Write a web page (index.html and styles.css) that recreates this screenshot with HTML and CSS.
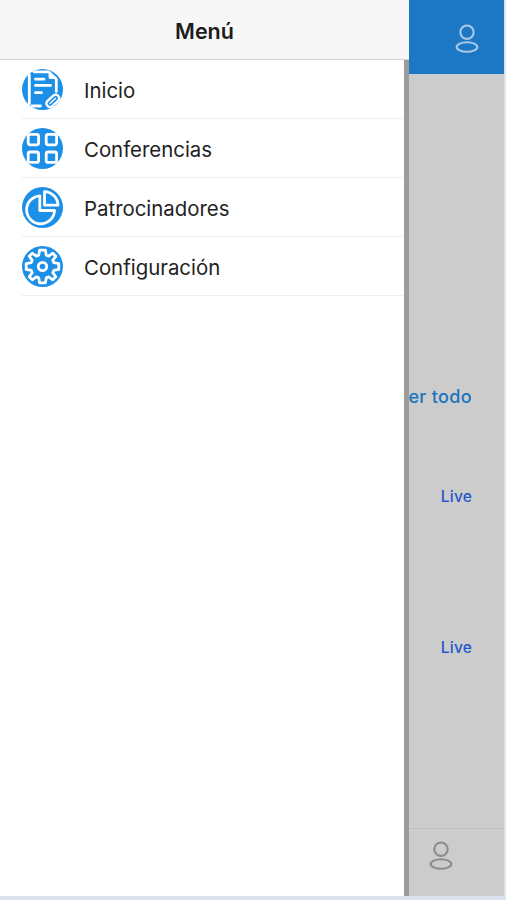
FILE: index.html
```
<!DOCTYPE html>
<html lang="es">
<head>
    <meta charset="UTF-8">
    <meta name="viewport" content="width=device-width, initial-scale=1.0">
    <title>Menú</title>
    <link rel="stylesheet" href="styles.css">
</head>
<body>

    <div class="app">
        <nav class="drawer">
            <header class="drawer-header">Menú</header>
            <ul class="menu">
                <li class="menu-item">
                    <svg class="icon" viewBox="0 0 41 41">
                        <circle class="disc" cx="20.5" cy="20.5" r="20.5"/>
                        <path d="M7.3 6V35M12 2.8H26.5L34.3 10V22.5M28 4V8.5H33M13.5 10.2H22M13.5 16.4H28.5M13.5 23.7H19.5M10 37H18.5"/>
                        <rect class="pencil" x="23.6" y="28.4" width="14.5" height="7" rx="3" transform="rotate(-43 30.8 31.9)"/>
                        <path class="thin" d="M28 34.5L33.6 29.3"/>
                    </svg>
                    <span>Inicio</span>
                </li>
                <li class="menu-item">
                    <svg class="icon" viewBox="0 0 41 41">
                        <circle class="disc" cx="20.5" cy="20.5" r="20.5"/>
                        <rect x="6.2" y="6.4" width="10.4" height="10.4" rx="2"/>
                        <rect x="24.2" y="6.4" width="10.4" height="10.4" rx="2"/>
                        <rect x="6.2" y="24" width="10.4" height="10.4" rx="2"/>
                        <rect x="24.2" y="24" width="10.4" height="10.4" rx="2"/>
                    </svg>
                    <span>Conferencias</span>
                </li>
                <li class="menu-item">
                    <svg class="icon" viewBox="0 0 41 41">
                        <circle class="disc" cx="20.5" cy="20.5" r="20.5"/>
                        <path d="M17.8 8.8A14 14 0 1 0 32.6 23.5H17.8Z"/>
                        <path d="M22.5 4.6A14 14 0 0 1 36 18.2H22.5Z"/>
                    </svg>
                    <span>Patrocinadores</span>
                </li>
                <li class="menu-item">
                    <svg class="icon" viewBox="0 0 41 41">
                        <circle class="disc" cx="20.5" cy="20.5" r="20.5"/>
                        <path d="M17.6 4.2H23.4L24.3 9.2L26.7 10.2L30.8 7.2L33.8 10.2L30.8 14.3L31.8 16.7L36.8 17.6V23.4L31.8 24.3L30.8 26.7L33.8 30.8L30.8 33.8L26.7 30.8L24.3 31.8L23.4 36.8H17.6L16.7 31.8L14.3 30.8L10.2 33.8L7.2 30.8L10.2 26.7L9.2 24.3L4.2 23.4V17.6L9.2 16.7L10.2 14.3L7.2 10.2L10.2 7.2L14.3 10.2L16.7 9.2Z"/>
                        <circle cx="20.5" cy="20.5" r="4.2"/>
                    </svg>
                    <span>Configuración</span>
                </li>
            </ul>
        </nav>

        <main class="page">
            <header class="page-header">
                <svg class="user" viewBox="0 0 24 30">
                    <circle cx="12" cy="8.2" r="6.7"/>
                    <ellipse cx="12" cy="23" rx="10.3" ry="4.8"/>
                </svg>
            </header>
            <section class="content">
                <a class="see-all">er todo</a>
                <a class="live">Live</a>
                <a class="live">Live</a>
            </section>
            <footer class="tabbar">
                <svg class="user" viewBox="0 0 24 30">
                    <circle cx="12" cy="8.2" r="6.7"/>
                    <ellipse cx="12" cy="23" rx="10.3" ry="4.8"/>
                </svg>
            </footer>
        </main>
    </div>

</body>
</html>
```
FILE: styles.css
```
body {
    margin: 0;
    background: #dde3ee;
    font-family: Inter, "Liberation Sans", sans-serif;
    overflow: hidden;
}

.app {
    display: flex;
    width: 504px;
    height: 896px;
    background: #ccc;
}

/* drawer */
.drawer {
    display: flex;
    flex-direction: column;
    width: 409px;
    flex-shrink: 0;
}

.drawer-header {
    height: 59px;
    line-height: 62px;
    background: #f7f7f7;
    border-bottom: 1px solid #d2d2d2;
    text-align: center;
    font-size: 21.5px;
    font-weight: 600;
    color: #1c1c1c;
}

.menu {
    flex: 1;
    margin: 0;
    padding: 0 0 0 22px;
    list-style: none;
    background: #fff;
    border-right: 5px solid #9c9c9c;
}

.menu-item {
    display: flex;
    align-items: center;
    gap: 21px;
    height: 58px;
    border-bottom: 1px solid #efefef;
    font-size: 20.4px;
    color: #222;
}

.menu-item span {
    padding-top: 2px;
}

.icon {
    width: 41px;
    height: 41px;
    fill: none;
    stroke: #fff;
    stroke-width: 2.8;
    stroke-linejoin: round;
    stroke-linecap: round;
}

.disc {
    fill: #1c8fe8;
    stroke: none;
}

.pencil {
    stroke-width: 2.4;
}

.thin {
    stroke-width: 1.4;
}

/* dimmed page behind the drawer */
.page {
    display: flex;
    flex-direction: column;
    width: 95px;
}

.page-header {
    height: 74px;
    background: #1c78c4;
}

.user {
    display: block;
    width: 24px;
    height: 30px;
    fill: none;
    stroke-width: 2.1;
}

.page-header .user {
    margin: 24px 0 0 46px;
    stroke: #abc8e6;
}

.content {
    flex: 1;
    display: flex;
    flex-direction: column;
    align-items: flex-end;
    padding: 311px 32px 0 0;
}

.see-all {
    height: 24px;
    line-height: 24px;
    margin-bottom: 78px;
    font-size: 18px;
    font-weight: 500;
    letter-spacing: 0.35px;
    color: #1c74bd;
    white-space: nowrap;
}

.live {
    height: 20px;
    line-height: 20px;
    margin-bottom: 131px;
    font-size: 15.5px;
    font-weight: 500;
    letter-spacing: 0.2px;
    color: #2458cc;
}

.tabbar {
    height: 67px;
    border-top: 1px solid #c0c0c0;
}

.tabbar .user {
    margin: 12px 0 0 20px;
    stroke: #8c8c8c;
}
```
